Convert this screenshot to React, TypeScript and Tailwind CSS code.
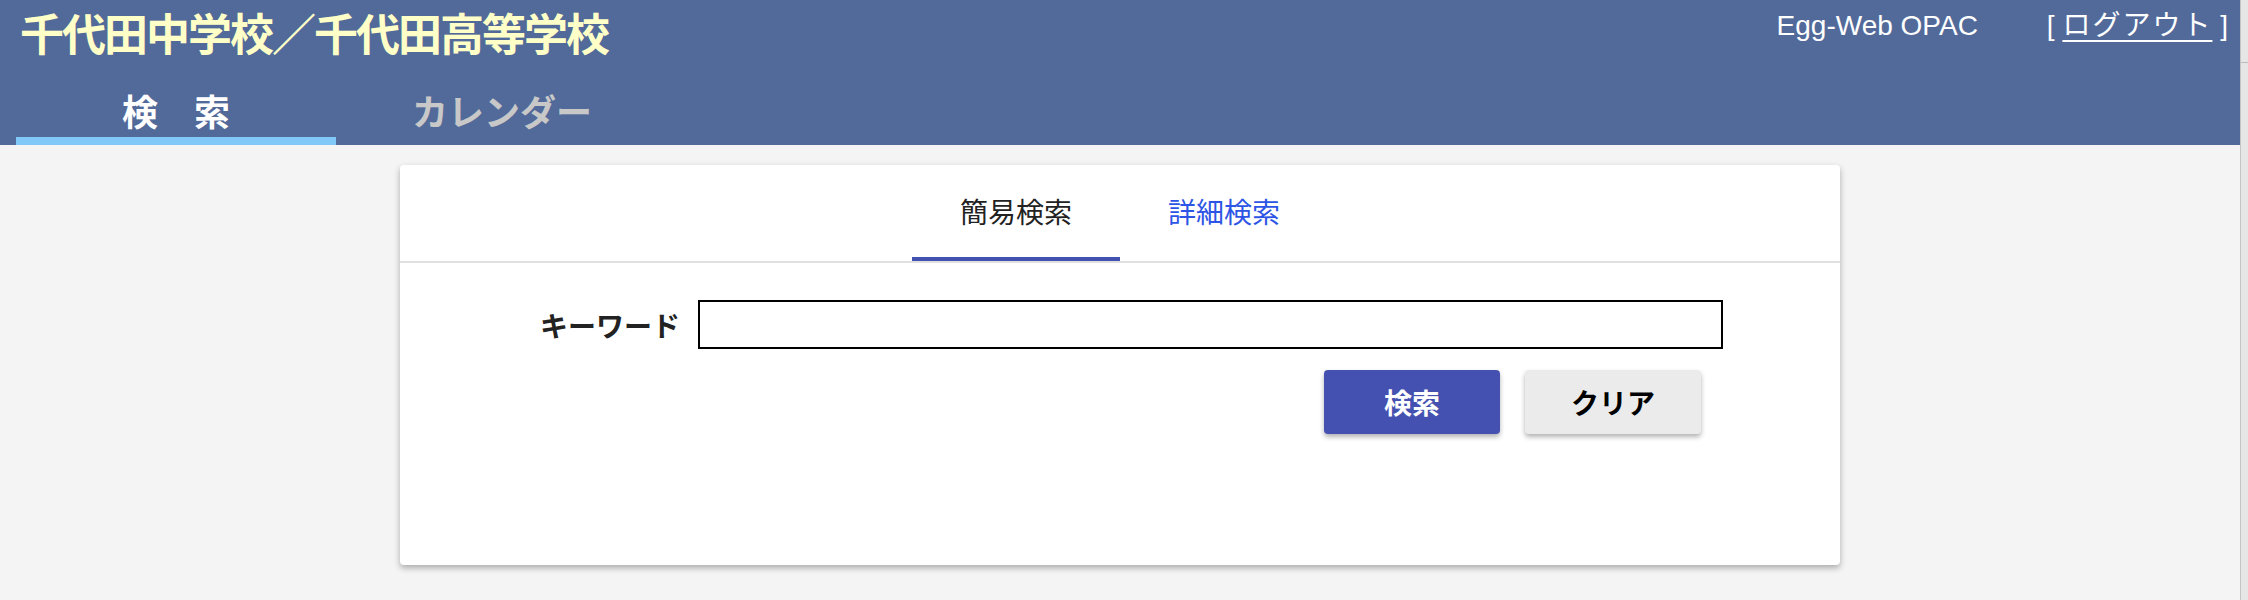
import React from "react";

const jp = "font-['Noto_Sans_CJK_JP',sans-serif]";

export default function App() {
    return (
        <div className="flex w-[2248px] h-[600px] bg-[#f4f4f4] overflow-hidden">
            <div className="flex-1 flex flex-col">
                {/* header */}
                <header className="h-[145px] bg-[#526a9a] flex flex-col">
                    <div className="h-[70px] flex items-start justify-between">
                        <h1 className={`${jp} pl-[20px] text-[44px] leading-[64px] font-bold text-[#ffffc8] tracking-[-2px]`}>
                            千代田中学校／千代田高等学校
                        </h1>
                        <div className="mt-[10px] mr-[12px] flex items-center gap-[69px] text-white text-[28px] leading-[32px] font-['Liberation_Sans','Noto_Sans_CJK_JP',sans-serif]">
                            <span>Egg-Web OPAC</span>
                            <span>
                                [ <a className="tracking-[2px] underline underline-offset-[5px] decoration-[2px]">ログアウト</a> ]
                            </span>
                        </div>
                    </div>
                    <nav className={`${jp} flex ml-[16px] h-[75px]`}>
                        <div className="w-[320px] pt-[12px] flex items-center justify-center border-b-[8px] border-[#80c8f8] text-[36px] font-bold text-white">
                            検　索
                        </div>
                        <div className="w-[320px] ml-[6px] pt-[12px] flex items-center justify-center border-b-[8px] border-transparent text-[36px] font-bold text-[#c8c8c8]">
                            カレンダー
                        </div>
                    </nav>
                </header>

                {/* search card */}
                <main className={`${jp} mt-[20px] mx-auto w-[1440px] h-[400px] bg-white rounded-[4px] shadow-[0_3px_6px_rgba(0,0,0,0.3)]`}>
                    <div className="flex justify-center border-b-2 border-[#e0e0e0]">
                        <div className="w-[208px] h-[96px] flex items-center justify-center border-b-4 border-[#4352b0] text-[28px] text-[#222]">
                            簡易検索
                        </div>
                        <div className="w-[208px] h-[96px] flex items-center justify-center border-b-4 border-transparent text-[28px] text-[#2d55e5]">
                            詳細検索
                        </div>
                    </div>

                    <div className="mt-[37px] flex items-center">
                        <label className="w-[280px] text-right text-[28px] font-bold text-[#222]">キーワード</label>
                        <input type="text" className="ml-[18px] w-[1025px] h-[49px] border-2 border-black bg-white outline-none" />
                    </div>

                    <div className="mt-[21px] flex justify-end gap-[25px] pr-[139px]">
                        <button className="w-[176px] h-[64px] rounded-[4px] bg-[#4451b1] text-white text-[28px] font-bold shadow-[0_3px_5px_rgba(0,0,0,0.3)]">
                            検索
                        </button>
                        <button className="w-[176px] h-[64px] rounded-[4px] bg-[#ebebeb] text-black text-[28px] font-bold shadow-[0_3px_5px_rgba(0,0,0,0.3)]">
                            クリア
                        </button>
                    </div>
                </main>
            </div>

            {/* scrollbar strip */}
            <div className="w-[8px] h-[600px] bg-[#e6e6e6] border-l border-[#c4c4c4] flex flex-col">
                <div className="h-[63px] border-b border-[#bdbdbd]" />
            </div>
        </div>
    );
}
